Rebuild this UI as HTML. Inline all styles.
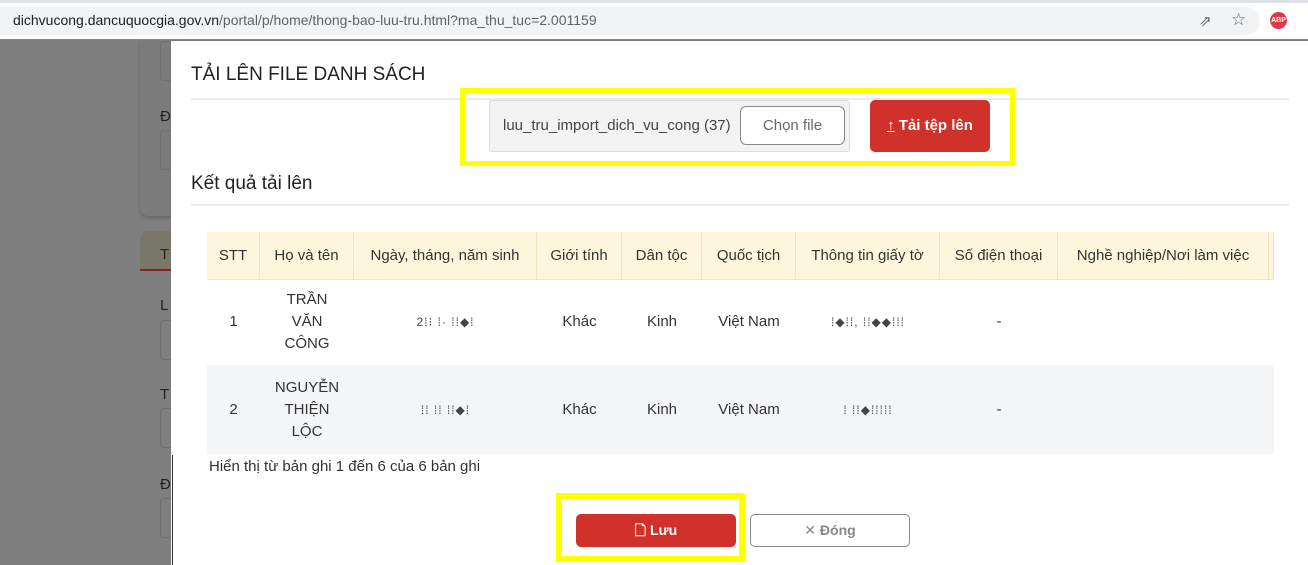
<!DOCTYPE html>
<html><head><meta charset="utf-8"><style>
*{box-sizing:border-box;margin:0;padding:0}
body{width:1308px;height:565px;overflow:hidden;background:#7f7f7f;font-family:"Liberation Sans",sans-serif;color:#333;position:relative}
.a{position:absolute}
.th,.td{position:absolute;text-align:center;font-size:15px;display:flex;align-items:center;justify-content:center;line-height:22px}
.th{top:232px;height:47px;background:#fdf6dc;border-right:1px solid #f0e6c0;color:#333}
.bl{color:#444;font-size:12px;letter-spacing:1px}
</style></head><body>
<div class="a" style="left:0;top:0;width:1308px;height:40px;background:#fff;border-bottom:1px solid #888"></div>
<div class="a" style="left:0;top:0;width:1308px;height:3px;background:#dee1e6"></div>
<div class="a" style="left:0;top:7px;width:1260px;height:28px;background:#f1f3f4;border-radius:0 14px 14px 0"></div>
<div class="a" style="left:13px;top:12px;font-size:14px;color:#202124">dichvucong.dancuquocgia.gov.vn<span style="color:#5f6368">/portal/p/home/thong-bao-luu-tru.html?ma_thu_tuc=2.001159</span></div>
<div class="a" style="left:1199px;top:12px;font-size:15px;color:#5f6368">⇗</div>
<div class="a" style="left:1231px;top:10px;font-size:17px;color:#5f6368">☆</div>
<div class="a" style="left:1270px;top:12px;width:17px;height:17px;border-radius:50%;background:#e2374b;color:#fff;font-size:7px;font-weight:bold;text-align:center;line-height:17px">ABP</div>
<div class="a" style="left:140px;top:41px;width:40px;height:175px;background:#7b7b7b;border-radius:0 0 0 8px;box-shadow:0 2px 4px rgba(0,0,0,.2)"></div>
<div class="a" style="left:160px;top:41px;width:20px;height:40px;border:1px solid #707070;border-right:0;border-radius:4px 0 0 4px"></div>
<div class="a" style="left:160px;top:108px;font-size:15px;color:#222">Đ</div>
<div class="a" style="left:160px;top:130px;width:20px;height:40px;border:1px solid #707070;border-right:0;border-radius:4px 0 0 4px"></div>
<div class="a" style="left:140px;top:231px;width:40px;height:40px;background:#7a7868;border-radius:8px 0 0 0;border-bottom:2px solid #8a2020"></div>
<div class="a" style="left:160px;top:246px;font-size:15px;color:#222">T</div>
<div class="a" style="left:160px;top:297px;font-size:15px;color:#222">L</div>
<div class="a" style="left:160px;top:320px;width:20px;height:40px;border:1px solid #707070;border-right:0;border-radius:4px 0 0 4px"></div>
<div class="a" style="left:160px;top:386px;font-size:15px;color:#222">T</div>
<div class="a" style="left:160px;top:408px;width:20px;height:40px;border:1px solid #707070;border-right:0;border-radius:4px 0 0 4px"></div>
<div class="a" style="left:160px;top:476px;font-size:15px;color:#222">Đ</div>
<div class="a" style="left:160px;top:498px;width:20px;height:40px;border:1px solid #707070;border-right:0;border-radius:4px 0 0 4px"></div>
<div class="a" style="left:171px;top:41px;width:1137px;height:524px;background:#fff"></div>
<div class="a" style="left:172px;top:455px;width:1px;height:110px;background:#333"></div>
<div class="a" style="left:191px;top:64px;font-size:19px;color:#222">TẢI LÊN FILE DANH SÁCH</div>
<div class="a" style="left:191px;top:98px;width:1098px;height:2px;background:#e9ecef"></div>
<div class="a" style="left:460px;top:88px;width:555px;height:78px;border:5px solid #ffff00"></div>
<div class="a" style="left:489px;top:100px;width:361px;height:52px;background:#f3f3f3;border:1px solid #ddd;border-radius:3px"></div>
<div class="a" style="left:503px;top:117px;font-size:15px;color:#444">luu_tru_import_dich_vu_cong (37)</div>
<div class="a" style="left:740px;top:106px;width:105px;height:39px;background:#fff;border:1px solid #888;border-radius:6px;font-size:15px;color:#666;text-align:center;line-height:37px">Chọn file</div>
<div class="a" style="left:870px;top:100px;width:120px;height:52px;background:#d0312a;border-radius:5px;color:#fff;font-size:15px;font-weight:bold;text-align:center;line-height:52px"><span style="font-weight:normal;text-decoration:underline">↑</span> Tải tệp lên</div>
<div class="a" style="left:191px;top:173px;font-size:19px;color:#222">Kết quả tải lên</div>
<div class="a" style="left:191px;top:204px;width:1098px;height:2px;background:#e9ecef"></div>
<div class="a" style="left:207px;top:365px;width:1067px;height:89px;background:#f4f5f7"></div>
<div class="a" style="left:207px;top:279px;width:1067px;height:1px;background:#e6e6e6"></div>
<div class="th" style="left:207px;width:53px">STT</div>
<div class="th" style="left:260px;width:94px">Họ và tên</div>
<div class="th" style="left:354px;width:183px">Ngày, tháng, năm sinh</div>
<div class="th" style="left:537px;width:85px">Giới tính</div>
<div class="th" style="left:622px;width:80px">Dân tộc</div>
<div class="th" style="left:702px;width:94px">Quốc tịch</div>
<div class="th" style="left:796px;width:144px">Thông tin giấy tờ</div>
<div class="th" style="left:940px;width:118px">Số điện thoại</div>
<div class="th" style="left:1058px;width:211px">Nghề nghiệp/Nơi làm việc</div>
<div class="th" style="left:1269px;width:5px"></div>
<div class="td" style="left:207px;top:279px;width:53px;height:86px">1</div>
<div class="td" style="left:260px;top:279px;width:94px;height:86px">TRẦN<br>VĂN<br>CÔNG</div>
<div class="td bl" style="left:354px;top:279px;width:183px;height:86px">2⁞⁝ ⁞·  ⁞⁞◆⁞</div>
<div class="td" style="left:537px;top:279px;width:85px;height:86px">Khác</div>
<div class="td" style="left:622px;top:279px;width:80px;height:86px">Kinh</div>
<div class="td" style="left:702px;top:279px;width:94px;height:86px">Việt Nam</div>
<div class="td bl" style="left:796px;top:279px;width:144px;height:86px">⁞◆⁞⁞, ⁞⁞◆◆⁞⁞⁞</div>
<div class="td" style="left:940px;top:279px;width:118px;height:86px">-</div>
<div class="td" style="left:207px;top:365px;width:53px;height:89px">2</div>
<div class="td" style="left:260px;top:365px;width:94px;height:89px">NGUYỄN<br>THIỆN<br>LỘC</div>
<div class="td bl" style="left:354px;top:365px;width:183px;height:89px">⁞⁞ ⁞⁞ ⁞⁞◆⁞</div>
<div class="td" style="left:537px;top:365px;width:85px;height:89px">Khác</div>
<div class="td" style="left:622px;top:365px;width:80px;height:89px">Kinh</div>
<div class="td" style="left:702px;top:365px;width:94px;height:89px">Việt Nam</div>
<div class="td bl" style="left:796px;top:365px;width:144px;height:89px">⁞ ⁞⁞◆⁞⁞⁞⁞⁞</div>
<div class="td" style="left:940px;top:365px;width:118px;height:89px">-</div>
<div class="a" style="left:209px;top:458px;font-size:15px;color:#333">Hiển thị từ bản ghi 1 đến 6 của 6 bản ghi</div>
<div class="a" style="left:556px;top:493px;width:189px;height:69px;border:6px solid #ffff00"></div>
<div class="a" style="left:576px;top:514px;width:160px;height:33px;background:#d0312a;border-radius:5px;color:#fff;font-size:14px;font-weight:bold;text-align:center;line-height:33px">🗋 Lưu</div>
<div class="a" style="left:750px;top:514px;width:160px;height:33px;background:#fff;border:1px solid #888;border-radius:5px;color:#888;font-size:14px;font-weight:bold;text-align:center;line-height:31px"><span style="font-weight:normal">✕</span> Đóng</div>
</body></html>
